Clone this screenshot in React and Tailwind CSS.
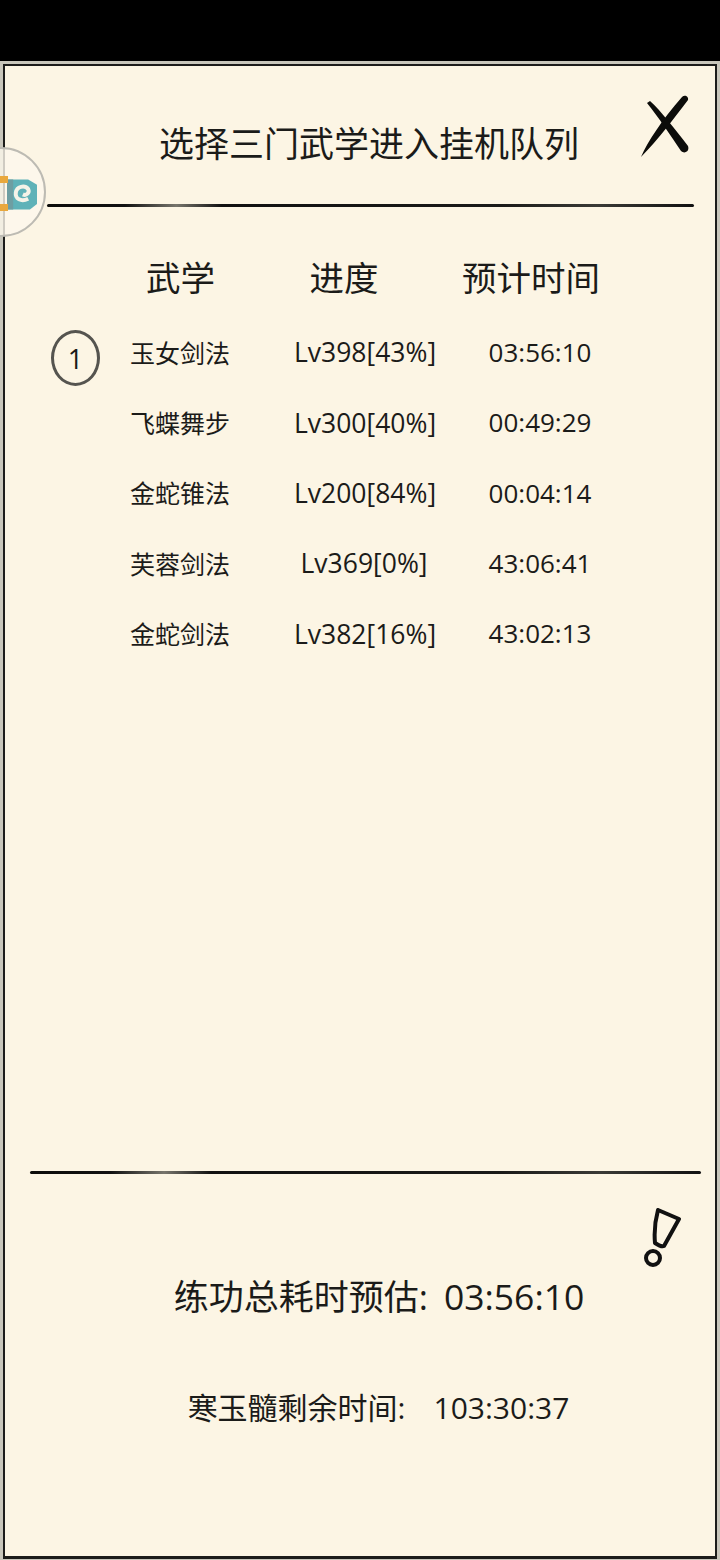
import React from 'react';

const rows = [
  { name: '玉女剑法', progress: 'Lv398[43%]', time: '03:56:10', queued: 1 },
  { name: '飞蝶舞步', progress: 'Lv300[40%]', time: '00:49:29' },
  { name: '金蛇锥法', progress: 'Lv200[84%]', time: '00:04:14' },
  { name: '芙蓉剑法', progress: 'Lv369[0%]', time: '43:06:41' },
  { name: '金蛇剑法', progress: 'Lv382[16%]', time: '43:02:13' },
];

function BrushRule({ className }) {
  return (
    <div className={`h-[3px] rounded-full bg-[linear-gradient(90deg,#0c0c0a_0%,#111_12%,#77756c_20%,#111_27%,#1a1a18_70%,#3a3a36_85%,#111_100%)] ${className}`} />
  );
}

function CloseIcon() {
  return (
    <svg width="48" height="64" viewBox="0 0 48 64" className="block">
      <path d="M0 63 C7 47 21 26 41 3 C44 0 48 3 47 6 C33 24 18 45 0 63 Z" fill="#0c0c0a" />
      <path d="M6 9 L9 7 C20 17 34 35 47 52 C49 58 43 60 40 57 C30 42 18 24 6 9 Z" fill="#0c0c0a" />
    </svg>
  );
}

function AlertIcon() {
  return (
    <svg width="38" height="62" viewBox="0 0 38 62" fill="none" stroke="#111" strokeWidth="4" strokeLinejoin="round" className="block">
      <path d="M14 2 L35 11 L20 38 C18 39 14 37 11 35 C10 24 11 13 14 2 Z" />
      <circle cx="9" cy="50" r="7" />
    </svg>
  );
}

function FloatingBadge() {
  return (
    <div className="absolute left-[-49px] top-[81px] flex h-[90px] w-[90px] items-center justify-end overflow-hidden rounded-full border-2 border-[#bdbbb3] bg-[#fdf8ec]/80">
      <svg width="30" height="35" viewBox="0 0 34 36" className="mr-[7px] mt-[3px] block">
        <path d="M0 2 H24 L34 8 V30 L26 36 H0 Z" fill="#5fb2b8" />
        <path d="M0 2 H7 V36 H0 Z" fill="#6e9ea2" />
        <path d="M24 24 C16 28 9 24 10 17 C11 10 20 8 24 13 C26 17 22 21 18 19" fill="none" stroke="#f5f3e8" strokeWidth="4.5" />
      </svg>
      <div className="absolute left-[42px] top-[27px] h-[7px] w-[8px] bg-[#e9a83d]" />
      <div className="absolute left-[42px] top-[55px] h-[7px] w-[8px] bg-[#e9a83d]" />
    </div>
  );
}

export default function App() {
  return (
    <div className="flex h-[1560px] w-[720px] flex-col overflow-hidden bg-black font-['Open_Sans','Noto_Sans_CJK_SC',sans-serif] text-[#1b1b19]">
      {/* status bar strip */}
      <div className="h-[61px] shrink-0 bg-black" />

      <div className="flex flex-1 flex-col bg-[#c8c6bb] pl-[3px] pr-[3px] pt-[3px] pb-[1px]">
        <div className="relative flex flex-1 flex-col border-x-[2px] border-b-[3px] border-t-[2px] border-[#1c1c1a] bg-[#fcf5e4]">
          <FloatingBadge />

          {/* title */}
          <div className="relative flex h-[138px] shrink-0 items-center justify-center pl-[18px] pt-[17px]">
            <h1 className="text-[35px] font-normal leading-none">选择三门武学进入挂机队列</h1>
            <div className="absolute right-[26px] top-[28px]">
              <CloseIcon />
            </div>
          </div>
          <BrushRule className="ml-[42px] mr-[21px]" />

          {/* table head */}
          <div className="grid h-[111px] shrink-0 grid-cols-[259px_160px_1fr] items-start pt-[54px] text-[34.5px] leading-none">
            <span className="pl-[141px] whitespace-nowrap">武学</span>
            <span className="text-center">进度</span>
            <span className="pl-[38px] text-left whitespace-nowrap">预计时间</span>
          </div>

          {/* table rows */}
          <div className="flex flex-col">
            {rows.map((row) => (
              <div key={row.name} className="grid h-[70.3px] grid-cols-[46px_79px_98px_66px_140px_53px_1fr] items-center text-[25px] leading-none">
                <div className="col-start-1 pl-[46px]">
                  {row.queued && (
                    <div className="mt-[10px] flex h-[56px] w-[49px] items-center justify-center rounded-[50%] border-[3px] border-[#55544f] text-[27px]">
                      {row.queued}
                    </div>
                  )}
                </div>
                <span className="col-start-3 whitespace-nowrap">{row.name}</span>
                <span className="col-start-5 mb-[1px] whitespace-nowrap text-center text-[26.5px]">{row.progress}</span>
                <span className="col-start-7 mb-[2px] w-[106px] whitespace-nowrap text-center text-[26px]">{row.time}</span>
              </div>
            ))}
          </div>

          <div className="flex-1" />

          <BrushRule className="ml-[25px] mr-[14px]" />

          {/* totals */}
          <div className="relative flex h-[382px] shrink-0 flex-col items-center">
            <div className="absolute right-[33px] top-[34px]">
              <AlertIcon />
            </div>
            <p className="mt-[105px] pl-[38px] text-[35px] leading-none whitespace-nowrap">
              练功总耗时预估:<span className="ml-[16px] text-[35.5px]">03:56:10</span>
            </p>
            <p className="mt-[78px] pl-[37px] text-[30px] leading-none whitespace-nowrap">
              寒玉髓剩余时间:<span className="ml-[28px]">103:30:37</span>
            </p>
          </div>
        </div>
      </div>
    </div>
  );
}
